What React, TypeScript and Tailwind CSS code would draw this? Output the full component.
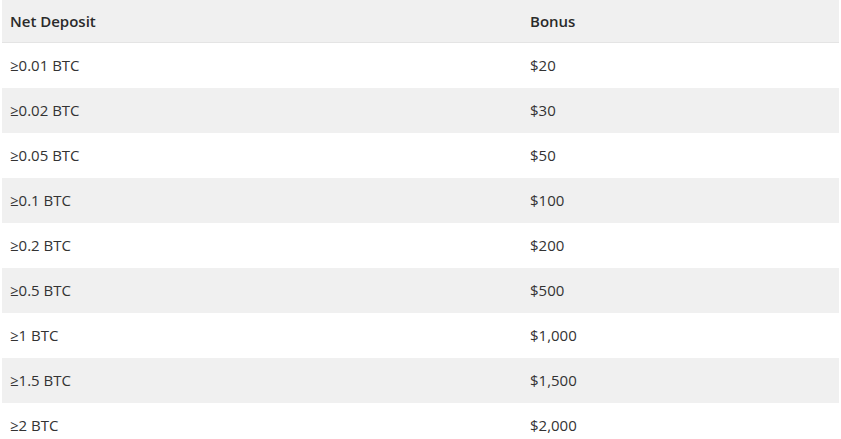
import React from "react";

// deposit tiers
const rows = [
  { deposit: "≥0.01 BTC", bonus: "$20" },
  { deposit: "≥0.02 BTC", bonus: "$30" },
  { deposit: "≥0.05 BTC", bonus: "$50" },
  { deposit: "≥0.1 BTC", bonus: "$100" },
  { deposit: "≥0.2 BTC", bonus: "$200" },
  { deposit: "≥0.5 BTC", bonus: "$500" },
  { deposit: "≥1 BTC", bonus: "$1,000" },
  { deposit: "≥1.5 BTC", bonus: "$1,500" },
  { deposit: "≥2 BTC", bonus: "$2,000" },
];

const App = () => {
  return (
    <div
      className="w-[841px] h-[439px] overflow-hidden bg-white px-[2px] text-[15px] text-[#333333]"
      style={{ fontFamily: '"Open Sans", "Noto Sans", sans-serif' }}
    >
      {/* header */}
      <div className="grid grid-cols-[520px_1fr] h-[43px] items-center bg-[#f0f0f0] border-b border-[#e4e4e4] font-semibold text-[#2a2a2a]">
        <div className="pl-2">Net Deposit</div>
        <div className="pl-2">Bonus</div>
      </div>

      {/* rows */}
      {rows.map((row, index) => (
        <div
          key={index}
          className={`grid grid-cols-[520px_1fr] h-[45px] items-center ${
            index % 2 === 1 ? "bg-[#f0f0f0]" : "bg-white"
          }`}
        >
          <div className="pl-2">{row.deposit}</div>
          <div className="pl-2">{row.bonus}</div>
        </div>
      ))}
    </div>
  );
};

export default App;
